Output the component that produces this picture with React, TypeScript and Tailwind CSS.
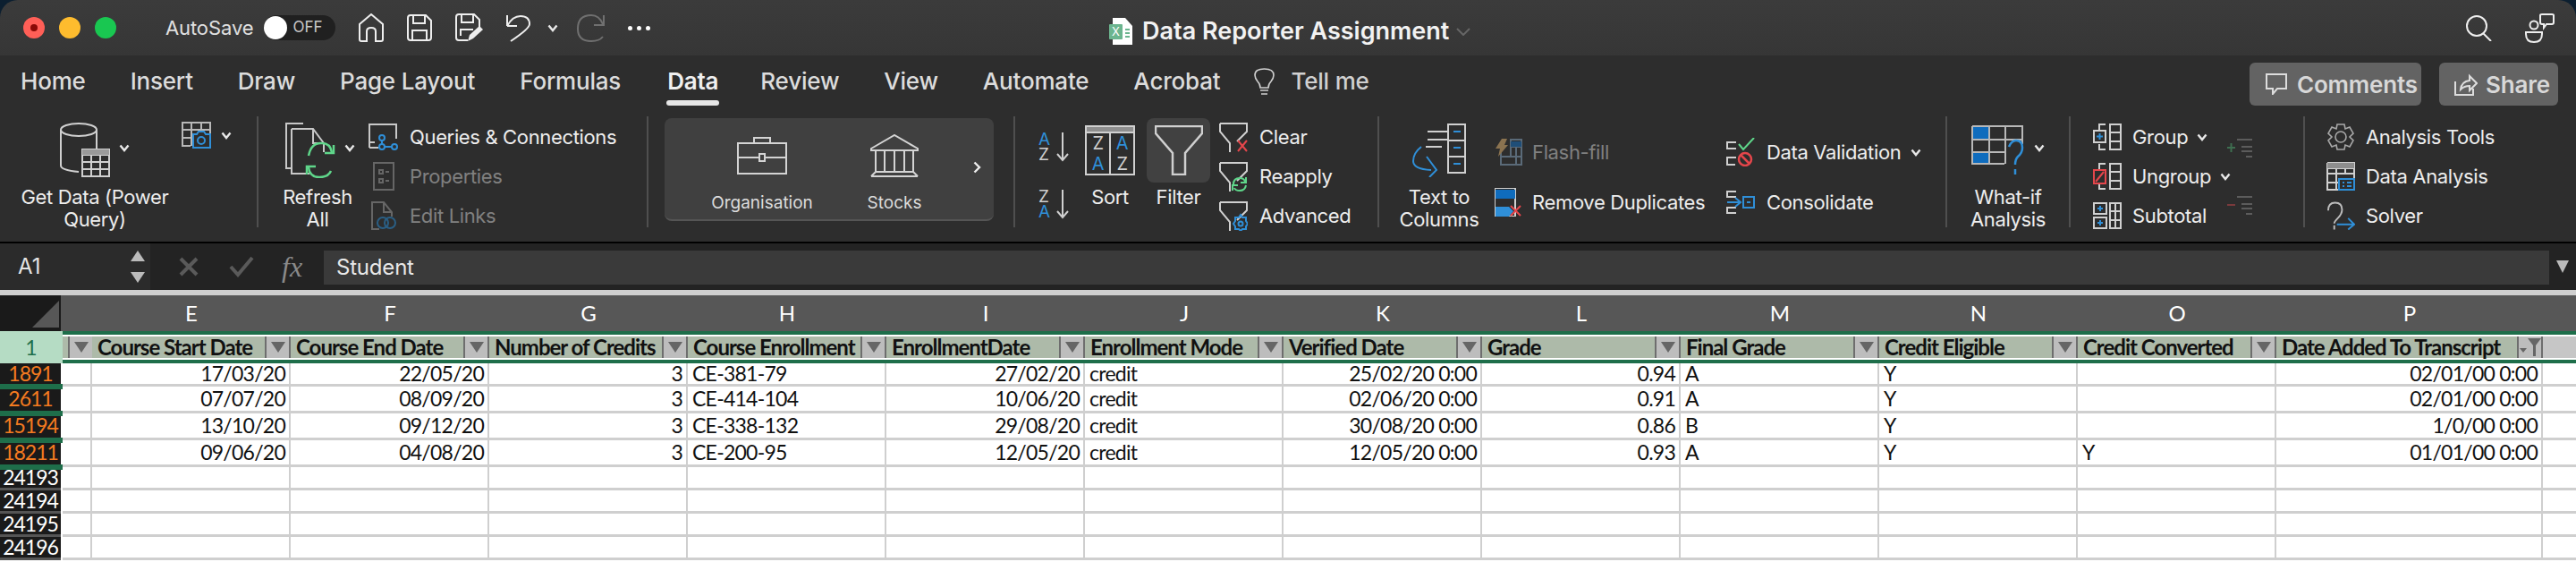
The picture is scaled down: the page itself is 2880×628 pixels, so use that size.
import type { ReactNode } from 'react';

const blue = '#2f8fd8';
const green = '#5fd68a';
const red = '#e5464b';

function Chevron({ color = '#e8e8e8' }: { color?: string }) {
  return (
    <svg width="12" height="9" viewBox="0 0 12 9" fill="none" stroke={color} strokeWidth="2.4">
      <path d="M1.5 1.5 6 7l4.5-5.5" />
    </svg>
  );
}

function HomeIcon() {
  return (
    <svg width="28" height="32" viewBox="0 0 28 32" fill="none" stroke="#eee" strokeWidth="2">
      <path d="M1 12 14 1l13 11v17q0 2-2 2h-6V20q0-4-5-4t-5 4v11H3q-2 0-2-2Z" />
    </svg>
  );
}

function SaveIcon() {
  return (
    <svg width="28" height="30" viewBox="0 0 28 30" fill="none" stroke="#eee" strokeWidth="2">
      <path d="M1 4q0-3 3-3h17l6 6v19q0 3-3 3H4q-3 0-3-3Z" />
      <path d="M7 1v9h13V1M6 29V18h16v11" />
    </svg>
  );
}

function SaveAsIcon() {
  return (
    <svg width="32" height="32" viewBox="0 0 32 32" fill="none" stroke="#eee" strokeWidth="2">
      <path d="M14 30H4q-3 0-3-3V4q0-3 3-3h17l6 6v8" />
      <path d="M7 1v9h13V1M6 25v-7h14" />
      <path d="m14 31 2-7 11-10 4 4-11 10Z" fill="#eee" stroke="none" />
    </svg>
  );
}

function UndoIcon() {
  return (
    <svg width="28" height="32" viewBox="0 0 28 32" fill="none" stroke="#eee" strokeWidth="2">
      <path d="M2 14V2M2 14h11M2 14 Q8 3 17 3 Q27 3 27 12 Q27 17 6 31" />
    </svg>
  );
}

function RedoIcon() {
  return (
    <svg width="33" height="32" viewBox="0 0 33 32" fill="none" stroke="#707070" strokeWidth="2">
      <path d="M31 2v11H20M30 12Q26 2 17 2 2 2 2 17q0 14 15 14 9 0 13-5" />
    </svg>
  );
}

function ExcelDoc() {
  return (
    <div className="relative w-[26px] h-[30px]">
      <svg width="26" height="30" viewBox="0 0 26 30">
        <path d="M4 0h14l8 9v21H4Z" fill="#fff" />
        <rect x="0" y="7" width="15" height="17" rx="1" fill="#6cb58f" />
        <path d="M18 12h5v2h-5zM18 16h5v2h-5zM18 20h5v2h-5z" fill="#6cb58f" />
      </svg>
      <span className="absolute left-[3px] top-[7px] text-[13px] leading-[17px] text-white">X</span>
    </div>
  );
}

function SearchIcon() {
  return (
    <svg width="30" height="29" viewBox="0 0 30 29" fill="none" stroke="#eee" strokeWidth="2">
      <circle cx="12" cy="12" r="11" />
      <path d="m19 20 9 9" />
    </svg>
  );
}

function PeopleIcon() {
  return (
    <svg width="33" height="33" viewBox="0 0 33 33" fill="none" stroke="#eee" strokeWidth="2">
      <circle cx="10" cy="13" r="4.5" />
      <path d="M1 21h18v2q0 9-9 9t-9-9Z" />
      <path d="M17 2q0-1 2-1h11q2 0 2 1v8q0 2-2 2h-6l-3 4v-4h-2q-2 0-2-2Z" />
    </svg>
  );
}

function GetDataIcon() {
  return (
    <svg width="56" height="62" viewBox="0 0 56 62" fill="none" stroke="#d0d0d0" strokeWidth="2">
      <ellipse cx="21" cy="8" rx="20" ry="7" />
      <path d="M1 8v40q0 5 20 7M41 8v22" />
      <path d="M25 30h30v30H25ZM25 36h30M25 44h30M25 52h30M35 36v24M45 36v24" fill="none" />
      <rect x="25" y="30" width="30" height="6" fill="#9a9a9a" stroke="none" />
    </svg>
  );
}

function SnapshotIcon() {
  return (
    <svg width="33" height="30" viewBox="0 0 33 30" fill="none" stroke="#b8b8b8" strokeWidth="2">
      <path d="M10 27H1V1h31v12M1 9h31M1 18h10M11 1v26M22 1v8" />
      <path d="M13 14h4l2-3h6l2 3h5v15H13Z" stroke={blue} />
      <circle cx="22" cy="21" r="4" stroke={blue} />
    </svg>
  );
}

function RefreshIcon() {
  return (
    <svg width="56" height="62" viewBox="0 0 56 62" fill="none" stroke="#c8c8c8" strokeWidth="2">
      <path d="M20 1H1v50h6" />
      <path d="M7 7h24l12 16v10M31 7v16h12M7 7v50h20" />
      <path d="M26 37q3-15 15-14 9 0 11 10M51 54q-3 7-13 7-11 0-12-11" stroke={green} strokeWidth="2.5" />
      <path d="M54 25v9H44M24 58v-9h10" stroke={green} strokeWidth="2.5" />
    </svg>
  );
}

function QueriesIcon() {
  return (
    <svg width="34" height="30" viewBox="0 0 34 30" fill="none" stroke="#c8c8c8" strokeWidth="2">
      <path d="M1 27V1h30v16M1 27h10M1 21h6" />
      <g stroke={blue}>
        <circle cx="15" cy="16" r="3" />
        <circle cx="15" cy="26" r="3" />
        <circle cx="29" cy="26" r="3" />
        <path d="M15 19v4M18 26h8" />
      </g>
    </svg>
  );
}

function PropertiesIcon() {
  return (
    <svg width="24" height="32" viewBox="0 0 24 32" fill="none" stroke="#666" strokeWidth="2">
      <rect x="1" y="1" width="22" height="30" />
      <rect x="7" y="9" width="4" height="4" />
      <rect x="7" y="19" width="4" height="4" />
      <path d="M14 11h4M14 21h4" />
    </svg>
  );
}

function EditLinksIcon() {
  return (
    <svg width="28" height="32" viewBox="0 0 28 32" fill="none" stroke="#666" strokeWidth="2">
      <path d="M9 31H1V1h13l9 11v5M14 1v11h9" />
      <g stroke="#2a5f85">
        <circle cx="13" cy="24" r="6" />
        <circle cx="21" cy="24" r="6" />
      </g>
    </svg>
  );
}

function BriefcaseIcon() {
  return (
    <svg width="56" height="42" viewBox="0 0 56 42" fill="none" stroke="#d4d4d4" strokeWidth="2">
      <rect x="1" y="7" width="54" height="34" />
      <path d="M19 7V1h18v6M1 23h23M32 23h23" />
      <rect x="25" y="19" width="6" height="8" />
    </svg>
  );
}

function BankIcon() {
  return (
    <svg width="54" height="48" viewBox="0 0 54 48" fill="none" stroke="#d4d4d4" strokeWidth="2">
      <path d="M1 16 27 1l26 15v2H1Z" />
      <path d="M6 18v24M16 18v24M27 18v24M38 18v24M48 18v24M6 42h42M1 47l5-5M53 47l-5-5M1 47h52" />
    </svg>
  );
}

function SortDirIcon({ top, bottom, up }: { top: string; bottom: string; up?: boolean }) {
  return (
    <div className="flex w-[34px] h-[34px] gap-[4px]">
      <div className="flex flex-col text-[19px] leading-[17px] w-[16px]">
        <span className={up ? 'text-[#d0d0d0]' : 'text-[#2f8fd8]'}>{top}</span>
        <span className={up ? 'text-[#2f8fd8]' : 'text-[#d0d0d0]'}>{bottom}</span>
      </div>
      <svg width="14" height="34" viewBox="0 0 14 34" fill="none" stroke="#d0d0d0" strokeWidth="2">
        <path d="M7 1v31M1 25l6 7 6-7" />
      </svg>
    </div>
  );
}

function SortIcon() {
  return (
    <div className="w-[56px] h-[56px] border-2 border-[#d0d0d0] flex flex-col text-[20px] leading-[23px]">
      <div className="h-[7px] bg-[#8e8e8e] border-b-2 border-[#d0d0d0] shrink-0" />
      <div className="flex-1 flex">
        <div className="flex-1 flex flex-col items-center border-r-2 border-[#d0d0d0]">
          <span className="text-[#d0d0d0]">Z</span>
          <span className="text-[#2f8fd8]">A</span>
        </div>
        <div className="flex-1 flex flex-col items-center">
          <span className="text-[#2f8fd8]">A</span>
          <span className="text-[#d0d0d0]">Z</span>
        </div>
      </div>
    </div>
  );
}

function FunnelIcon() {
  return (
    <svg width="54" height="56" viewBox="0 0 54 56" fill="none" stroke="#d0d0d0" strokeWidth="2.5">
      <path d="M1 1h52v8L34 31v24H20V31L1 9Z" />
    </svg>
  );
}

function SmallFunnel({ children }: { children: ReactNode }) {
  return (
    <svg width="32" height="33" viewBox="0 0 32 33" fill="none" stroke="#d0d0d0" strokeWidth="2">
      <path d="M1 1h30v9l-11 11M1 1v9l11 13v10" />
      {children}
    </svg>
  );
}

function TextColumnsIcon() {
  return (
    <svg width="60" height="60" viewBox="0 0 60 60" fill="none" stroke="#d0d0d0" strokeWidth="2">
      <path d="M17 9h24M17 18h24M15 26h18" />
      <rect x="40" y="1" width="19" height="54" />
      <path d="M40 19h19M40 37h19" />
      <path d="M46 9h8M46 27h8M46 45h8" stroke={blue} />
      <path d="M10 26q-9 7-9 16 0 9 20 10M16 37l11 15-8 8" stroke={blue} />
    </svg>
  );
}

function FlashFillIcon() {
  return (
    <svg width="33" height="30" viewBox="0 0 33 30" fill="none">
      <path d="M9 9V29H32V1H20v20M9 20h23M20 9h12M26 9v20" stroke="#5a6a78" strokeWidth="2" />
      <rect x="20" y="3" width="12" height="6" fill="#1f4e78" />
      <path d="M10 0h6l-3 7h4L6 20l2-9H3Z" fill="#8b7350" />
    </svg>
  );
}

function RemoveDupIcon() {
  return (
    <svg width="30" height="32" viewBox="0 0 30 32" fill="none">
      <rect x="0" y="0" width="23" height="32" stroke="#d0d0d0" strokeWidth="2" />
      <rect x="1" y="2" width="22" height="10" fill="#0f6cbd" />
      <path d="M1 21h15l5 5-5 6H1Z" fill={blue} />
      <path d="m18 20 11 11M29 20 18 31" stroke={red} strokeWidth="2" />
    </svg>
  );
}

function ValidationIcon() {
  return (
    <svg width="32" height="32" viewBox="0 0 32 32" fill="none">
      <path d="M11 5H1v7h10M11 22H1v8h9" stroke="#d0d0d0" strokeWidth="2" />
      <path d="m14 7 5 6 12-13" stroke={green} strokeWidth="2" />
      <circle cx="21" cy="24" r="7" stroke={red} strokeWidth="2.5" />
      <path d="m16 19 10 10" stroke={red} strokeWidth="2.5" />
    </svg>
  );
}

function ConsolidateIcon() {
  return (
    <svg width="32" height="26" viewBox="0 0 32 26" fill="none" strokeWidth="2">
      <path d="M11 1H1v6h10M11 19H1v6h10" stroke="#d0d0d0" />
      <path d="M1 13h14M10 8l6 5-6 5" stroke={blue} />
      <rect x="19" y="7" width="12" height="12" stroke={blue} />
      <path d="M23 13h4" stroke={blue} />
    </svg>
  );
}

function WhatIfIcon() {
  return (
    <svg width="60" height="56" viewBox="0 0 60 56" fill="none" stroke="#b8b8b8" strokeWidth="2">
      <rect x="1" y="1" width="19" height="16" fill="#0f6cbd" stroke="none" />
      <rect x="1" y="29" width="19" height="14" fill="#0f6cbd" stroke="none" />
      <path d="M1 1h56v20M1 1v42h36M1 16h56M1 30h36M20 1v42M38 1v42" />
      <path d="M42 24q3-7 8-7 7 0 7 8 0 6-5 10-3 3-3 9M49 49v6" stroke={blue} strokeWidth="2.5" />
    </svg>
  );
}

function OutlineIcon({ mode }: { mode: 'group' | 'ungroup' | 'subtotal' }) {
  return (
    <svg width="32" height="30" viewBox="0 0 32 30" fill="none" stroke="#d0d0d0" strokeWidth="2">
      {mode === 'subtotal' ? (
        <path d="M19 1h12v28H19ZM19 10h12M19 20h12M25 1v28M1 1h14v12H1ZM1 17h14v12H1Z" />
      ) : (
        <path d="M19 1h12v28H19ZM19 10h12M19 20h12M14 1H7v6M14 29H7v-6" />
      )}
      {mode === 'group' && <rect x="1" y="8" width="13" height="13" />}
      {mode === 'group' && <path d="M7.5 11v7M4 14.5h7" stroke={blue} />}
      {mode === 'ungroup' && <rect x="1" y="8" width="13" height="15" stroke={red} />}
      {mode === 'ungroup' && <path d="m3 21 9-11" stroke={red} />}
      {mode === 'subtotal' && <path d="M8 4v6M5 7h6M8 20v6M5 23h6" stroke={blue} />}
    </svg>
  );
}

function LinesIcon({ plus }: { plus?: boolean }) {
  return (
    <svg width="30" height="22" viewBox="0 0 30 22" fill="none" strokeWidth="2">
      <path d="M12 2h17M17 10h12M17 15h12M22 21h7" stroke="#5c5c5c" />
      {plus ? <path d="M1 11h9M5.5 6v10" stroke="#3e6e50" /> : <path d="M1 11h9" stroke="#7a3a3c" />}
    </svg>
  );
}

function GearIcon() {
  return (
    <svg width="30" height="30" viewBox="0 0 30 30" fill="none" stroke="#a8a8a8" strokeWidth="1.6">
      <path d="M11 1h8l1 5 5-2 4 7-4 4 4 4-4 7-5-2-1 5h-8l-1-5-5 2-4-7 4-4-4-4 4-7 5 2Z" />
      <circle cx="15" cy="15" r="6" />
    </svg>
  );
}

function DataAnalysisIcon() {
  return (
    <svg width="32" height="32" viewBox="0 0 32 32" fill="none" stroke="#d0d0d0" strokeWidth="2">
      <path d="M1 1h30v18M1 1v30h12M1 7h30M1 13h30M1 23h12M11 7v24M21 7v6" />
      <rect x="1" y="1" width="30" height="6" fill="#8e8e8e" stroke="none" />
      <rect x="14" y="19" width="17" height="12" stroke={blue} />
      <path d="M18 23h2M23 23h5M18 27h2M23 27h5" stroke={blue} />
    </svg>
  );
}

function SolverIcon() {
  return (
    <svg width="33" height="32" viewBox="0 0 33 32" fill="none" strokeWidth="2">
      <path d="M2 10q0-9 8-9t8 8q0 5-5 10-4 4-4 6M9 27v5" stroke="#bdbdbd" />
      <path d="M12 26h20M25 19l7 7-7 6" stroke={blue} />
    </svg>
  );
}

function Sep() {
  return <div className="w-[2px] h-[124px] bg-[#4f4f4f] shrink-0" />;
}

function BigButton({ icon, lines, width, active }: { icon: ReactNode; lines: string[]; width: string; active?: boolean }) {
  return (
    <div className={`${width} shrink-0 flex flex-col items-center text-[22px] leading-[25px] text-[#ededed] text-center whitespace-nowrap tracking-[-0.35px]`}>
      <div className={active ? 'h-[78px] w-full pt-[2px]' : 'h-[78px] w-full'}>
        <div className={active ? 'h-[72px] w-full flex items-center justify-center gap-[10px] rounded-lg bg-[#414141]' : 'h-[76px] w-full flex items-center justify-center gap-[10px]'}>
          {icon}
        </div>
      </div>
      {lines.map((l) => (
        <div key={l}>{l}</div>
      ))}
    </div>
  );
}

function SmallRow({ icon, label, box, gap, dim, chevron }: { icon: ReactNode; label: string; box: string; gap: string; dim?: boolean; chevron?: boolean }) {
  return (
    <div className={`h-[32px] flex items-center whitespace-nowrap text-[22px] tracking-[-0.35px] ${gap} ${dim ? 'text-[#808080]' : 'text-[#ededed]'}`}>
      <div className={`${box} shrink-0 flex items-center justify-center`}>{icon}</div>
      <span>{label}</span>
      {chevron && <span className="-ml-[2px] flex"><Chevron /></span>}
    </div>
  );
}

const tabs = ['Home', 'Insert', 'Draw', 'Page Layout', 'Formulas', 'Data', 'Review', 'View', 'Automate', 'Acrobat'];

function TitleBar() {
  return (
    <div className="h-[62px] flex items-center bg-gradient-to-b from-[#3b3b3b] to-[#363636] rounded-t-[20px] relative">
      <div className="flex gap-[16px] ml-[26px]">
        <div className="size-[24px] rounded-full bg-[#ff5f57] flex items-center justify-center">
          <div className="size-[8px] rounded-full bg-[#8a0a06]" />
        </div>
        <div className="size-[24px] rounded-full bg-[#febc2e]" />
        <div className="size-[24px] rounded-full bg-[#19c751]" />
      </div>
      <span className="ml-[55px] text-[22px] text-[#e0e0e0] tracking-[-0.1px]">AutoSave</span>
      <div className="ml-[12px] w-[80px] h-[28px] rounded-full bg-[#202020] flex items-center">
        <div className="size-[26px] rounded-full bg-white" />
        <span className="ml-[6px] text-[17px] text-[#c8c8c8]">OFF</span>
      </div>
      <div className="ml-[26px] flex items-center">
        <HomeIcon />
        <div className="ml-[26px]"><SaveIcon /></div>
        <div className="ml-[26px]"><SaveAsIcon /></div>
        <div className="ml-[24px]"><UndoIcon /></div>
        <div className="ml-[19px]"><Chevron /></div>
        <div className="ml-[20px]"><RedoIcon /></div>
        <div className="ml-[25px] flex gap-[5px]">
          <div className="size-[5px] rounded-full bg-white" />
          <div className="size-[5px] rounded-full bg-white" />
          <div className="size-[5px] rounded-full bg-white" />
        </div>
      </div>
      <div className="absolute left-[1240px] top-[15px] flex items-center">
        <ExcelDoc />
        <span className="ml-[11px] text-[27px] font-semibold text-[#f2f2f2]">Data Reporter Assignment</span>
        <span className="ml-[8px]">
          <svg width="16" height="9" viewBox="0 0 16 9" fill="none" stroke="#666" strokeWidth="2"><path d="m1 1 7 7 7-7" /></svg>
        </span>
      </div>
      <div className="ml-auto flex items-center gap-[36px] mr-[24px]">
        <SearchIcon />
        <PeopleIcon />
      </div>
    </div>
  );
}

function TabRow() {
  return (
    <div className="h-[68px] flex items-start pl-[23px]">
      <div className="flex gap-[50px] text-[26px] font-medium leading-[32px] pt-[13px] text-[#dcdcdc] tracking-[-0.2px]">
        {tabs.map((t) => (
          <div key={t} className={t === 'Data' ? 'relative font-semibold text-[#f0f0f0] ml-[2px] -mr-[3px]' : ''}>
            {t}
            {t === 'Data' && <div className="absolute left-[-1px] right-[-1px] top-[37px] h-[6px] rounded-full bg-[#e6e6e6]" />}
          </div>
        ))}
        <div className="flex items-center gap-[18px] -ml-[12px] text-[#d0d0d0]">
          <svg width="23" height="30" viewBox="0 0 23 30" fill="none" stroke="#cfcfcf" strokeWidth="1.6">
            <path d="M7 22q0-4-3-7-3-4-3-7Q1 1 11.5 1T22 8q0 3-3 7-3 3-3 7ZM7 25h9M8 29h7" />
          </svg>
          <span>Tell me</span>
        </div>
      </div>
      <div className="ml-auto mr-[20px] mt-[8px] flex gap-[20px] text-[26px] font-semibold text-[#d8d8d8] tracking-[-0.2px]">
        <div className="w-[192px] h-[48px] rounded-md bg-[#636363] flex items-center pl-[18px] gap-[11px]">
          <svg width="24" height="24" viewBox="0 0 24 24" fill="none" stroke="#ddd" strokeWidth="2"><path d="M1 1h22v16H13l-5 6v-6H1Z" /></svg>
          <span>Comments</span>
        </div>
        <div className="w-[133px] h-[48px] rounded-md bg-[#636363] flex items-center pl-[17px] gap-[9px]">
          <svg width="26" height="26" viewBox="0 0 26 26" fill="none" stroke="#ddd" strokeWidth="2"><path d="M1 10v15h20v-7M7 19q1-9 10-10V4l8 8-8 8v-5q-6 0-10 4Z" /></svg>
          <span>Share</span>
        </div>
      </div>
    </div>
  );
}

function Ribbon() {
  return (
    <div className="flex h-[140px]">
      <div className="w-[287px] flex pl-[20px]">
        <BigButton width="w-[172px]" icon={<><GetDataIcon /><div className="mt-[-6px]"><Chevron /></div></>} lines={['Get Data (Power', 'Query)']} />
        <div className="ml-[11px] mt-[6px] flex gap-[11px]">
          <SnapshotIcon />
          <div className="mt-[11px]"><Chevron /></div>
        </div>
      </div>
      <Sep />
      <div className="w-[434px] flex pl-[26px]">
        <BigButton width="w-[80px]" icon={<><div className="ml-[5px]"><RefreshIcon /></div><div className="mt-[-6px]"><Chevron /></div></>} lines={['Refresh', 'All']} />
        <div className="ml-[17px] pt-[7px] flex flex-col gap-[12px]">
          <SmallRow box="w-[34px]" gap="gap-[12px]" icon={<QueriesIcon />} label="Queries & Connections" />
          <SmallRow box="w-[34px]" gap="gap-[12px]" icon={<PropertiesIcon />} label="Properties" dim />
          <SmallRow box="w-[34px]" gap="gap-[12px]" icon={<EditLinksIcon />} label="Edit Links" dim />
        </div>
      </div>
      <Sep />
      <div className="w-[408px] pl-[18px]">
        <div className="mt-[2px] w-[368px] h-[115px] rounded-lg bg-[#404040] border-b-2 border-[#555] flex pl-[29px] text-[19px] text-[#dcdcdc]">
          <div className="w-[160px] flex flex-col items-center">
            <div className="h-[70px] flex items-center pt-[14px]"><BriefcaseIcon /></div>
            <span className="mt-[11px]">Organisation</span>
          </div>
          <div className="w-[136px] flex flex-col items-center">
            <div className="h-[70px] flex items-center pt-[14px]"><BankIcon /></div>
            <span className="mt-[11px]">Stocks</span>
          </div>
          <div className="ml-[20px] flex items-center mb-[4px]">
            <svg width="9" height="14" viewBox="0 0 9 14" fill="none" stroke="#eee" strokeWidth="2.4"><path d="m1.5 1.5 5.5 5.5-5.5 5.5" /></svg>
          </div>
        </div>
      </div>
      <Sep />
      <div className="w-[405px] flex pl-[26px]">
        <div className="w-[32px] pt-[17px] flex flex-col gap-[30px]">
          <SortDirIcon top="A" bottom="Z" />
          <SortDirIcon top="Z" bottom="A" up />
        </div>
        <div className="ml-[20px]"><BigButton width="w-[56px]" icon={<SortIcon />} lines={['Sort']} /></div>
        <div className="ml-[13px]"><BigButton width="w-[71px]" active icon={<FunnelIcon />} lines={['Filter']} /></div>
        <div className="ml-[10px] pt-[7px] flex flex-col gap-[12px]">
          <SmallRow box="w-[32px]" gap="gap-[13px]" icon={<SmallFunnel><path d="m21 20 10 12M31 20 21 32" stroke={red} /></SmallFunnel>} label="Clear" />
          <SmallRow box="w-[32px]" gap="gap-[13px]" icon={<SmallFunnel><path d="M16 25q0-7 7-7 5 0 6 4M30 26q-1 6-7 6-5 0-6-3M30 17v6h-6M15 32v-6h6" stroke={green} /></SmallFunnel>} label="Reapply" />
          <SmallRow box="w-[32px]" gap="gap-[13px]" icon={<SmallFunnel><path d="m24 15 2 3 4 0 0 4 2 3-2 3 0 3-4 0-2 2-2-2-4 0 0-3-2-3 2-3 0-4 4 0Z" stroke={blue} /><circle cx="24" cy="25" r="2.5" stroke={blue} /></SmallFunnel>} label="Advanced" />
        </div>
      </div>
      <Sep />
      <div className="w-[633px] flex pl-[22px]">
        <BigButton width="w-[90px]" icon={<TextColumnsIcon />} lines={['Text to', 'Columns']} />
        <div className="ml-[15px] pt-[24px] w-[261px] flex flex-col gap-[24px]">
          <SmallRow box="w-[33px]" gap="gap-[11px]" icon={<FlashFillIcon />} label="Flash-fill" dim />
          <SmallRow box="w-[33px]" gap="gap-[11px]" icon={<RemoveDupIcon />} label="Remove Duplicates" />
        </div>
        <div className="pt-[24px] flex flex-col gap-[24px]">
          <SmallRow box="w-[32px]" gap="gap-[13px]" icon={<ValidationIcon />} label="Data Validation" chevron />
          <SmallRow box="w-[32px]" gap="gap-[13px]" icon={<ConsolidateIcon />} label="Consolidate" />
        </div>
      </div>
      <Sep />
      <div className="w-[136px] flex pl-[26px]">
        <BigButton width="w-[84px]" icon={<><WhatIfIcon /><div className="mt-[-6px]"><Chevron /></div></>} lines={['What-if', 'Analysis']} />
      </div>
      <Sep />
      <div className="w-[260px] flex pl-[25px]">
        <div className="w-[149px] pt-[7px] flex flex-col gap-[12px]">
          <SmallRow box="w-[32px]" gap="gap-[12px]" icon={<OutlineIcon mode="group" />} label="Group" chevron />
          <SmallRow box="w-[32px]" gap="gap-[12px]" icon={<OutlineIcon mode="ungroup" />} label="Ungroup" chevron />
          <SmallRow box="w-[32px]" gap="gap-[12px]" icon={<OutlineIcon mode="subtotal" />} label="Subtotal" />
        </div>
        <div className="pt-[24px] flex flex-col gap-[42px]">
          <LinesIcon plus />
          <LinesIcon />
        </div>
      </div>
      <Sep />
      <div className="pl-[24px] pt-[7px] flex flex-col gap-[12px]">
        <SmallRow box="w-[32px]" gap="gap-[12px]" icon={<GearIcon />} label="Analysis Tools" />
        <SmallRow box="w-[32px]" gap="gap-[12px]" icon={<DataAnalysisIcon />} label="Data Analysis" />
        <SmallRow box="w-[32px]" gap="gap-[12px]" icon={<SolverIcon />} label="Solver" />
      </div>
    </div>
  );
}

function FormulaBar() {
  return (
    <div className="h-[60px] bg-[#232323] border-t-2 border-b-[6px] border-t-black border-b-[#cfcfcf] flex">
      <div className="w-[168px] bg-[#2b2b2b] flex items-center pl-[20px] pr-[6px] justify-between text-[24px] text-[#e4e4e4]">
        <span>A1</span>
        <div className="flex flex-col gap-[12px]">
          <svg width="16" height="12" viewBox="0 0 16 12" fill="#bbb"><path d="m8 0 8 12H0Z" /></svg>
          <svg width="16" height="12" viewBox="0 0 16 12" fill="#bbb"><path d="m8 12 8-12H0Z" /></svg>
        </div>
      </div>
      <div className="w-[194px] flex items-center pl-[32px]">
        <svg width="22" height="22" viewBox="0 0 22 22" fill="none" stroke="#5a5a5a" strokeWidth="4"><path d="m2 2 18 18M20 2 2 20" /></svg>
        <svg className="ml-[34px]" width="28" height="24" viewBox="0 0 28 24" fill="none" stroke="#5a5a5a" strokeWidth="4"><path d="m2 12 8 9L26 2" /></svg>
        <span className="ml-[31px] font-['Liberation_Serif',serif] italic text-[32px] text-[#8a8a8a]">fx</span>
      </div>
      <div className="w-[2488px] mt-[8px] h-[38px] bg-[#3a3a3a] pl-[14px] flex items-center text-[24px] text-[#e8e8e8] tracking-[-0.2px]">Student</div>
      <div className="flex-1 flex items-center justify-center">
        <svg width="14" height="14" viewBox="0 0 14 14" fill="#bbb"><path d="m7 14 7-14H0Z" /></svg>
      </div>
    </div>
  );
}

const columns = [
  { letter: '', width: 'w-[33px]', name: '' },
  { letter: 'E', width: 'w-[222px]', name: 'Course Start Date' },
  { letter: 'F', width: 'w-[222px]', name: 'Course End Date' },
  { letter: 'G', width: 'w-[222px]', name: 'Number of Credits' },
  { letter: 'H', width: 'w-[222px]', name: 'Course Enrollment' },
  { letter: 'I', width: 'w-[222px]', name: 'EnrollmentDate' },
  { letter: 'J', width: 'w-[222px]', name: 'Enrollment Mode' },
  { letter: 'K', width: 'w-[222px]', name: 'Verified Date' },
  { letter: 'L', width: 'w-[222px]', name: 'Grade' },
  { letter: 'M', width: 'w-[222px]', name: 'Final Grade' },
  { letter: 'N', width: 'w-[222px]', name: 'Credit Eligible' },
  { letter: 'O', width: 'w-[222px]', name: 'Credit Converted' },
  { letter: 'P', width: 'w-[298px]', name: 'Date Added To Transcript' },
];

type Align = 'r' | 'l';
const aligns: Align[] = ['l', 'r', 'r', 'r', 'l', 'r', 'l', 'r', 'r', 'l', 'l', 'l', 'r'];

const rows = [
  { id: '1891', h: 'h-[26px]', hidden: true, cells: ['', '17/03/20', '22/05/20', '3', 'CE-381-79', '27/02/20', 'credit', '25/02/20 0:00', '0.94', 'A', 'Y', '', '02/01/00 0:00'] },
  { id: '2611', h: 'h-[30px]', hidden: true, cells: ['', '07/07/20', '08/09/20', '3', 'CE-414-104', '10/06/20', 'credit', '02/06/20 0:00', '0.91', 'A', 'Y', '', '02/01/00 0:00'] },
  { id: '15194', h: 'h-[30px]', hidden: true, cells: ['', '13/10/20', '09/12/20', '3', 'CE-338-132', '29/08/20', 'credit', '30/08/20 0:00', '0.86', 'B', 'Y', '', '1/0/00 0:00'] },
  { id: '18211', h: 'h-[30px]', hidden: true, cells: ['', '09/06/20', '04/08/20', '3', 'CE-200-95', '12/05/20', 'credit', '12/05/20 0:00', '0.93', 'A', 'Y', 'Y', '01/01/00 0:00'] },
  ...['24193', '24194', '24195', '24196'].map((id) => ({ id, h: 'h-[26px]', hidden: false, cells: Array(13).fill('') as string[] })),
];

function FilterButton({ applied }: { applied?: boolean }) {
  return (
    <div className="w-[29px] h-full shrink-0 bg-[#bdbdbd] border-x-2 border-[#6e6e6e] flex items-center justify-center">
      {applied ? (
        <svg width="24" height="20" viewBox="0 0 24 20" fill="#666"><path d="M9 0h15l-6 8v12h-3V8ZM0 11h8l-4 5Z" /></svg>
      ) : (
        <svg width="16" height="12" viewBox="0 0 16 12" fill="#666"><path d="m8 12 8-12H0Z" /></svg>
      )}
    </div>
  );
}

function Sheet() {
  return (
    <div className="font-['Lato',sans-serif] bg-white h-[298px]">
      <div className="h-[40px] flex bg-[#575757] text-[24px] text-white">
        <div className="w-[68px] h-full bg-[#1a1a1a] flex items-end justify-end pr-[2px] pb-[4px] shrink-0">
          <svg width="60" height="30" viewBox="0 0 60 30"><path d="M60 0v30H30Z" fill="#575757" /></svg>
        </div>
        <div className="w-[2px] bg-[#575757]" />
        {columns.map((c) => (
          <div key={c.width + c.letter} className={`${c.width} shrink-0 flex items-center justify-center`}>{c.letter}</div>
        ))}
      </div>
      <div className="h-[36px] flex">
        <div className="w-[70px] shrink-0 bg-[#b5dcc4] flex items-center justify-center text-[23px] text-[#1e6e4a]">1</div>
        <div className="flex-1 min-w-0 border-y-4 border-[#1e6e4a] bg-white">
          <div className="h-[28px] flex py-[2px] bg-white text-[24px] font-bold text-[#111] tracking-[-1px]">
            {columns.map((c, i) => (
              <div key={c.width + c.letter} className={`${c.width} shrink-0 flex bg-[#adbaa9]`}>
                <div className="flex-1 min-w-0 pl-[6px] leading-[24px] whitespace-nowrap">{c.name}</div>
                <FilterButton applied={i === 12} />
              </div>
            ))}
            <div className="flex-1 bg-[#c6c6c6]" />
          </div>
        </div>
      </div>
      {rows.map((r) => (
        <div key={r.id} className={`${r.h} flex text-[23px] text-[#111] tracking-[-0.75px] leading-none`}>
          <div className={`w-[68px] shrink-0 bg-[#1a1a1a] relative flex items-center justify-center border-b-[3px] tracking-[-1px] ${r.hidden ? 'text-[#f47b20] border-[#1e6e4a]' : 'text-white border-[#555]'}`}>
            {r.id}
            {r.hidden && <div className="absolute left-0 w-[70px] bottom-[-6px] h-[6px] bg-[#1e6e4a] z-10" />}
          </div>
          <div className="w-[2px] shrink-0 bg-white" />
          {r.cells.map((v, i) => (
            <div key={i} className={`${columns[i].width} shrink-0 flex items-center border-r-2 border-b-[3px] border-[#cfcfcf] ${aligns[i] === 'r' ? 'justify-end pr-[4px]' : 'pl-[5px]'}`}>
              {v}
            </div>
          ))}
          <div className="flex-1 border-b-[3px] border-[#cfcfcf]" />
        </div>
      ))}
    </div>
  );
}

export default function App() {
  return (
    <div className="w-[2880px] h-[628px] overflow-hidden bg-[#0c1f30] font-['Inter',sans-serif]">
      <TitleBar />
      <div className="bg-[#2d2d2d] h-[208px]">
        <TabRow />
        <Ribbon />
      </div>
      <FormulaBar />
      <Sheet />
    </div>
  );
}
